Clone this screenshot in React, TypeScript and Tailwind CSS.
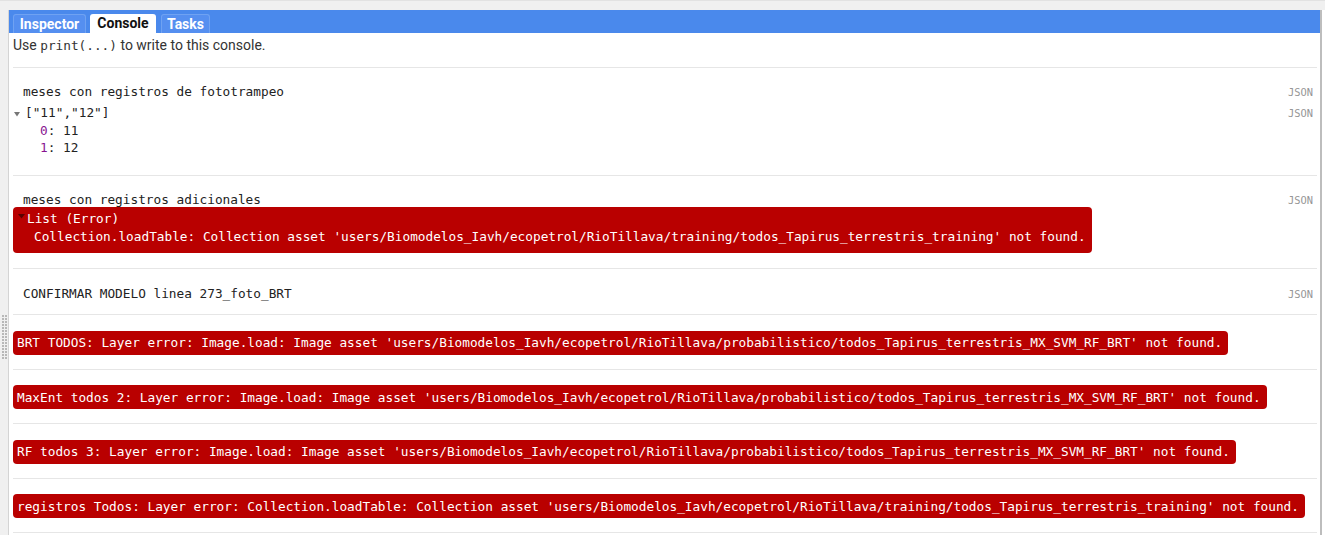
const MONO = "font-['DejaVu_Sans_Mono','Liberation_Mono',monospace]"

type LayerError = {
  label: string
  message: string
}

const ASSET_PROB =
  "'users/Biomodelos_Iavh/ecopetrol/RioTillava/probabilistico/todos_Tapirus_terrestris_MX_SVM_RF_BRT'"
const ASSET_TRAIN =
  "'users/Biomodelos_Iavh/ecopetrol/RioTillava/training/todos_Tapirus_terrestris_training'"

const LAYER_ERRORS: LayerError[] = [
  { label: 'BRT TODOS', message: `Image.load: Image asset ${ASSET_PROB} not found.` },
  { label: 'MaxEnt todos 2', message: `Image.load: Image asset ${ASSET_PROB} not found.` },
  { label: 'RF todos 3', message: `Image.load: Image asset ${ASSET_PROB} not found.` },
  {
    label: 'registros Todos',
    message: `Collection.loadTable: Collection asset ${ASSET_TRAIN} not found.`,
  },
]

function JsonTag() {
  return <span className="pr-[4px] text-[10.4px] text-[#969696]">JSON</span>
}

function Caret({ className }: { className: string }) {
  return (
    <svg width="6" height="5" viewBox="0 0 6 5" className={className}>
      <path d="M0 0 L6 0 L3 4.5 Z" fill="currentColor" />
    </svg>
  )
}

function LabelLine({ text }: { text: string }) {
  return (
    <div className="flex h-[17px] items-baseline justify-between">
      <span className="pl-[10px] text-[12.75px] text-[#222]">{text}</span>
      <JsonTag />
    </div>
  )
}

function DragHandle() {
  const dots = []
  for (let r = 0; r < 15; r++) {
    for (let c = 0; c < 2; c++) {
      dots.push(<rect key={`${r}-${c}`} x={c * 3} y={r * 3} width="2" height="2" fill="#b8b8b8" />)
    }
  }
  return (
    <svg width="5" height="45" viewBox="0 0 5 45">
      {dots}
    </svg>
  )
}

export default function App() {
  return (
    <div className="flex h-[535px] w-[1325px] flex-col overflow-hidden bg-[#f0f0f0] font-['Roboto',sans-serif]">
      <div className="h-[10px] shrink-0 border-t border-[#e2e2e2]" />
      <div className="flex min-h-0 flex-1">
        <div className="flex w-[9px] shrink-0 flex-col items-center border-r border-[#d4d4d4] pt-[305px]">
          <DragHandle />
        </div>

        <div className="flex min-w-0 flex-1 flex-col bg-white">
          <div className="flex h-[23px] shrink-0 items-end bg-[#4a89ec] pl-[4px]">
            <div className="flex h-[19px] w-[73px] items-center justify-center rounded-t-[3px] border border-b-0 border-[#6fa2f2] bg-[#558ff0] text-[14px] font-bold text-white">
              Inspector
            </div>
            <div className="ml-[4px] flex h-[19px] w-[66px] items-center justify-center rounded-t-[3px] bg-white text-[14px] font-bold text-[#111]">
              Console
            </div>
            <div className="ml-[5px] flex h-[19px] w-[49px] items-center justify-center rounded-t-[3px] border border-b-0 border-[#6fa2f2] bg-[#558ff0] text-[14px] font-bold text-white">
              Tasks
            </div>
          </div>

          <div className={`ml-[4px] mr-[3px] flex flex-col ${MONO}`}>
            <div className="h-[35px] border-b border-[#e6e6e6] pt-[3px] font-['Roboto',sans-serif] text-[14px] leading-[18px] text-[#333]">
              Use <span className={`${MONO} text-[12.75px]`}>print(...)</span> to write to this console.
            </div>

            <div className="border-b border-[#e6e6e6] pb-[19px] pt-[14px]">
              <LabelLine text="meses con registros de fototrampeo" />
              <div className="mt-[4px] flex h-[17px] items-baseline justify-between">
                <span className="flex items-baseline text-[12.75px] text-[#222]">
                  <Caret className="mr-[5px] ml-[1px] text-[#777]" />
                  ["11","12"]
                </span>
                <JsonTag />
              </div>
              <div className="mt-[2px] pl-[27px] text-[12.75px] leading-[17px] text-[#222]">
                <div>
                  <span className="text-[#881391]">0</span>: 11
                </div>
                <div>
                  <span className="text-[#881391]">1</span>: 12
                </div>
              </div>
            </div>

            <div className="border-b border-[#e6e6e6] pb-[15px] pt-[14px]">
              <LabelLine text="meses con registros adicionales" />
              <div className="inline-block rounded-[4px] bg-[#b90000] pb-[7px] pl-[5px] pr-[6px] pt-[3px] text-[12.75px] leading-[18px] text-white">
                <div className="flex items-start">
                  <svg width="7" height="5" viewBox="0 0 7 5" className="mr-[2px] mt-[4px] text-[#5c0000]">
                    <path d="M0 0 L7 0 L3.5 4.5 Z" fill="currentColor" />
                  </svg>
                  List (Error)
                </div>
                <div className="pl-[16px]">
                  Collection.loadTable: Collection asset {ASSET_TRAIN} not found.
                </div>
              </div>
            </div>

            <div className="border-b border-[#e6e6e6] pb-[13px] pt-[15px]">
              <LabelLine text="CONFIRMAR MODELO linea 273_foto_BRT" />
            </div>

            {LAYER_ERRORS.map((err) => (
              <div key={err.label} className="border-b border-[#e6e6e6] pb-[14px] pt-[15px]">
                <div className="inline-flex h-[24px] items-center rounded-[4px] bg-[#b90000] pl-[4px] pr-[6px] text-[12.75px] text-white">
                  {err.label}: Layer error: {err.message}
                </div>
              </div>
            ))}
          </div>
        </div>

        <div className="w-[2px] shrink-0 bg-[#bdbdbd]" />
        <div className="w-[3px] shrink-0 bg-white" />
      </div>
    </div>
  )
}
